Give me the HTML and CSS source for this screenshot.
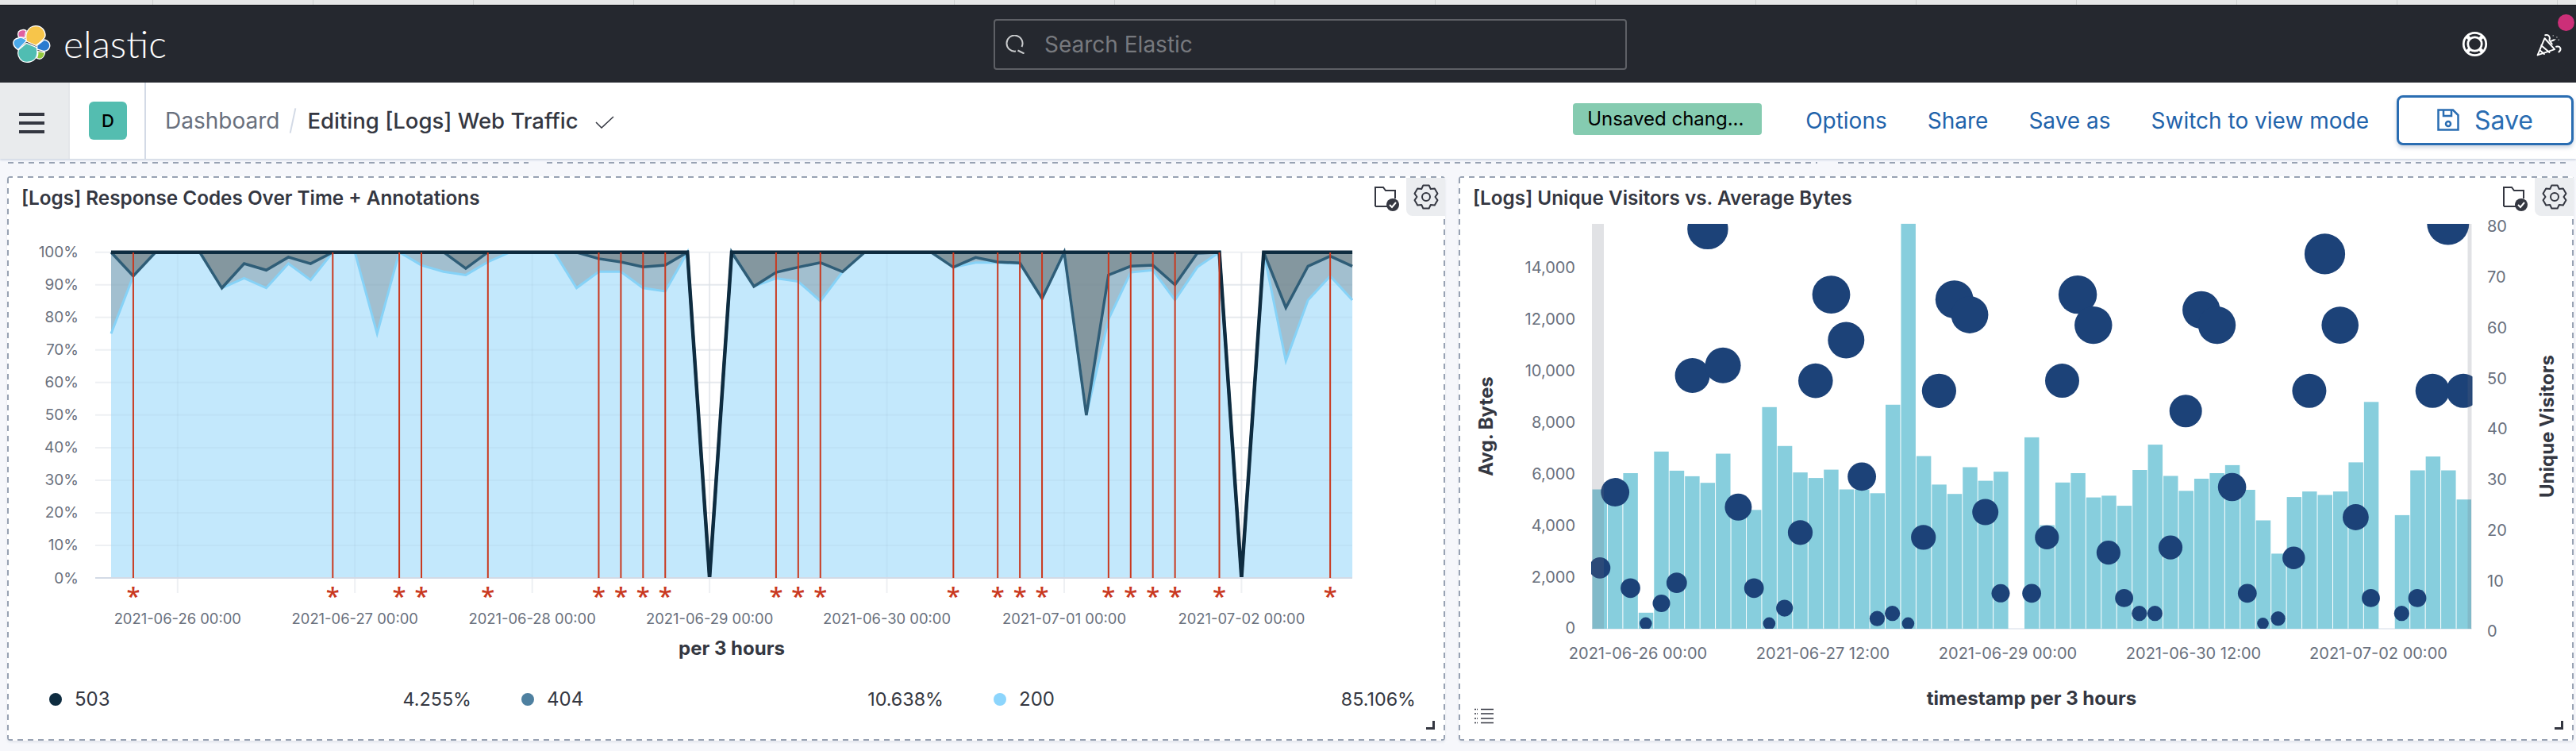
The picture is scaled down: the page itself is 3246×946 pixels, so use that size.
FILE: index.html
```html
<!DOCTYPE html>
<html lang="en">
<head>
<meta charset="utf-8">
<title>Editing [Logs] Web Traffic</title>
<link rel="stylesheet" href="styles.css">
</head>
<body>
<div class="tabstrip"></div>
<header class="topbar">
  <div class="brand">
    <svg class="logo" viewBox="48 30 144 144" aria-hidden="true">
      <g stroke="#fff" stroke-width="4" stroke-linejoin="round">
        <path fill="#e0609f" d="M70 54C78 45 92 45 99 50 96 58 95 66 95 76L70 74C67 66 67 60 70 54Z"/>
        <path fill="#4aa9ea" d="M68 78C80 74 92 78 101 88L68 122C55 113 49 102 51 92 53 84 60 80 68 78Z"/>
        <path fill="#2a7bcf" d="M140 106L168 84C182 88 190 98 188 110 186 122 175 128 165 127L140 120Z"/>
        <path fill="#93c83d" d="M142 128L170 132C168 145 160 156 150 157L139 154C143 145 144 135 142 128Z"/>
        <path fill="#50bdb2" d="M70 122L100 97 138 113C143 130 142 142 135 153 125 169 100 173 85 165 70 155 65 138 70 122Z"/>
        <path fill="#f7c54a" d="M135 32C160 32 172 52 171 70 169 80 160 88 136 106L100 90C97 75 97 66 102 54 108 40 122 32 135 32Z"/>
      </g>
    </svg>
    <span class="wordmark">elastic</span>
  </div>
  <div class="search">
    <svg class="search-icon" viewBox="0 0 24 24" aria-hidden="true"><path d="M13 20.500A10 10 0 1 1 20.500 15M15.500 19.500L23.500 23.500"/></svg>
    <span class="search-text">Search Elastic</span>
  </div>
  <div class="top-icons">
    <svg class="help" viewBox="0 0 36 36" aria-hidden="true">
      <circle cx="18" cy="18" r="15.500"/><circle cx="18" cy="18" r="9.500"/>
      <path d="M7 7l4.500 4.500M29 7l-4.500 4.500M7 29l4.500-4.500M29 29l-4.500-4.500" stroke-width="5"/>
    </svg>
    <span class="cheer-wrap">
      <svg class="cheer" viewBox="310 60 110 100" aria-hidden="true">
        <path d="M323 152L350 88 388 130ZM337 115L368 142M333 135L348 148"/>
        <path d="M352 76C366 72 372 84 368 94M378 110L368 96M372 100L386 94M394 120C410 116 416 130 404 140"/>
        <path class="dots" d="M382 78h1M396 84h1M403 94h1M390 92h1"/>
      </svg>
      <span class="badge-dot"></span>
    </span>
  </div>
</header>
<nav class="crumbbar">
  <button class="menu" aria-label="Menu"><span></span><span></span><span></span></button>
  <div class="space"><span class="avatar">D</span></div>
  <div class="crumbs">
    <span class="crumb">Dashboard</span>
    <span class="slash"></span>
    <span class="crumb current">Editing [Logs] Web Traffic</span>
    <svg class="tick" viewBox="0 0 24 16" aria-hidden="true"><path d="M1 8l7 7L23 1"/></svg>
  </div>
  <div class="actions">
    <span class="unsaved">Unsaved chang...</span>
    <a class="link">Options</a>
    <a class="link">Share</a>
    <a class="link">Save as</a>
    <a class="link last">Switch to view mode</a>
    <button class="save">
      <svg viewBox="0 0 28 28" aria-hidden="true"><path d="M1.500 1.500H20L26.500 8V26.500H1.500ZM8 1.500V9H18V1.500"/><circle cx="14" cy="19" r="3"/></svg>
      <span>Save</span>
    </button>
  </div>
</nav>
<div class="cutoff"><span class="c1"></span><span class="c2"></span><span class="c3"></span></div>
<main class="grid">
  <section class="panel">
    <div class="panel-head">
      <h2>[Logs] Response Codes Over Time + Annotations</h2>
      <svg class="folder" viewBox="0 0 32 32" aria-hidden="true"><path class="fl" d="M1 26V2H11L14 6H26V16M18 26H1"/><circle cx="23" cy="24" r="8"/><path class="ck" d="M19 24l3 3 5-6"/></svg>
      <span class="gear-btn"><svg viewBox="0 0 32 32" aria-hidden="true"><path d="M12.370 1.450H19.630L21.750 6.040 26.790 5.580 30.420 11.870 27.500 16 30.420 20.130 26.790 26.420 21.750 25.960 19.630 30.550H12.370L10.250 25.960 5.210 26.420 1.580 20.130 4.500 16 1.580 11.870 5.210 5.580 10.250 6.040Z"/><circle cx="16" cy="16" r="5"/></svg></span>
    </div>
    <svg id="chart1" class="chart c-one" viewBox="11 272 1808 568"></svg>
    <div class="legend">
      <div class="leg"><i class="dot d503"></i><span>503</span><b>4.255%</b></div>
      <div class="leg"><i class="dot d404"></i><span>404</span><b>10.638%</b></div>
      <div class="leg"><i class="dot d200"></i><span>200</span><b>85.106%</b></div>
    </div>
    <span class="resize"></span>
  </section>
  <section class="panel">
    <div class="panel-head">
      <h2>[Logs] Unique Visitors vs. Average Bytes</h2>
      <svg class="folder" viewBox="0 0 32 32" aria-hidden="true"><path class="fl" d="M1 26V2H11L14 6H26V16M18 26H1"/><circle cx="23" cy="24" r="8"/><path class="ck" d="M19 24l3 3 5-6"/></svg>
      <span class="gear-btn"><svg viewBox="0 0 32 32" aria-hidden="true"><path d="M12.370 1.450H19.630L21.750 6.040 26.790 5.580 30.420 11.870 27.500 16 30.420 20.130 26.790 26.420 21.750 25.960 19.630 30.550H12.370L10.250 25.960 5.210 26.420 1.580 20.130 4.500 16 1.580 11.870 5.210 5.580 10.250 6.040Z"/><circle cx="16" cy="16" r="5"/></svg></span>
    </div>
    <svg id="chart2" class="chart c-two" viewBox="1840 272 1401 649"></svg>
    <svg class="legend-toggle" viewBox="0 0 24 20" aria-hidden="true"><path d="M8 1.500H24M8 7H24M8 13H24M8 18.500H24"/><path d="M0 1.500H4M0 7H4M0 13H4M0 18.500H4" stroke-dasharray="2 1"/></svg>
    <span class="resize"></span>
  </section>
</main>
<script src="chart.js"></script>
</body>
</html>
```

FILE: styles.css
```css
* { box-sizing: border-box; }
html, body { margin: 0; padding: 0; }
body {
  width: 3246px; height: 946px; overflow: hidden;
  background: #f6f7fb;
  font-family: Inter, "Liberation Sans", sans-serif;
  color: #343741;
}
.tabstrip {
  height: 7px;
  border-bottom: 1px solid #15171b;
  background: repeating-linear-gradient(90deg, #e6e7e7 0 192px, #cfd1d1 192px 193px, #e6e7e7 193px 202px);
}
.topbar { height: 97px; background: #25282f; display: flex; align-items: center; }
.brand { flex: 0 0 1252px; display: flex; align-items: center; padding-left: 16px; }
.logo { width: 48px; height: 48px; }
.wordmark { margin-left: 16px; font-family: Lato, sans-serif; font-weight: 300; font-size: 48px; line-height: 48px; color: #fff; position: relative; top: -1px; }
.search {
  flex: 0 0 798px; height: 64px; display: flex; align-items: center;
  border: 2px solid #5e6066; border-radius: 4px; padding-left: 13px;
}
.search-icon { width: 24px; height: 24px; fill: none; stroke: #c9cbcd; stroke-width: 2; }
.search-text { margin-left: 25px; font-size: 28px; color: #77797e; }
.top-icons { flex: 1; display: flex; align-items: center; justify-content: flex-end; padding-right: 16px; }
.help { width: 33px; height: 33px; fill: none; stroke: #fff; stroke-width: 3; margin-right: 58px; }
.cheer-wrap { display: block; width: 37px; height: 33px; position: relative; }
.cheer { display: block; width: 37px; height: 33px; fill: none; stroke: #fff; stroke-width: 6; stroke-linejoin: round; stroke-linecap: round; }
.cheer .dots { stroke-width: 4; stroke: #b9bbbe; }
.badge-dot { position: absolute; right: -14px; top: -21px; width: 21px; height: 21px; border-radius: 50%; background: #cc2f78; }

.crumbbar { height: 96px; background: #fff; display: flex; align-items: stretch; box-shadow: 0 2px 2px #d3dae6; position: relative; }
.menu {
  flex: 0 0 88px; background: #e9ebed; border: 0; padding: 38px 32px 0 24px; position: relative;
  display: flex; flex-direction: column; gap: 7px; align-items: stretch;
  box-shadow: inset -2px 0 0 #e4e6e9;
}
.menu span { height: 4px; background: #343741; }
.space { flex: 0 0 96px; padding: 24px 0 0 24px; border-right: 2px solid #d3dae6; }
.avatar {
  display: flex; width: 48px; height: 48px; border-radius: 6px; background: #54bdb0;
  align-items: center; justify-content: center; font-size: 22px; font-weight: 500; color: #000;
}
.crumbs { display: flex; align-items: center; padding-left: 24px; height: 96px; }
.crumb { font-size: 28px; color: #69707d; }
.crumb.current { color: #343741; font-weight: 500; font-size: 27.500px; }
.slash { width: 2px; height: 32px; background: #d3dae6; transform: rotate(12deg); margin: 0 17px 0 16px; }
.tick { width: 24px; height: 16px; margin-left: 21px; fill: none; stroke: #343741; stroke-width: 1.500; margin-top: 3px; }
.actions { margin-left: auto; display: flex; align-items: center; padding-right: 3px; }
.unsaved {
  width: 238px; height: 40px; background: #85cbb0; border-radius: 4px; margin-right: 55px; position: relative; top: -2px;
  font-size: 24px; line-height: 40px; padding-left: 18px; color: #000; white-space: nowrap;
}
.link { font-size: 28px; color: #1f63ab; margin-right: 51px; white-space: nowrap; }
.link.last { margin-right: 35px; }
.save {
  width: 223px; height: 63px; background: #fff; border: 3px solid #2a6db2; border-radius: 8px;
  box-shadow: 0 3px 5px rgba(60, 90, 140, .25);
  display: flex; align-items: center; justify-content: center; gap: 19px;
  font: 400 32px Inter, sans-serif; color: #2a6db2; position: relative; top: -1px;
}
.save svg { width: 28px; height: 28px; fill: none; stroke: #2a6db2; stroke-width: 2.500; }

.cutoff { height: 22px; display: flex; }
.cutoff span { display: block; height: 2px; margin-top: 4px; background: repeating-linear-gradient(90deg, #98a2b3 0 7px, transparent 7px 13px); }
.c1 { margin-left: 10px; width: 656px; }
.c2 { margin-left: 23px; width: 1601px; }
.c3 { margin-left: 26px; width: 923px; }

.grid { display: grid; grid-template-columns: 1812px 1405px; gap: 17px; padding-left: 9px; }
.panel {
  height: 711px; padding: 2px; border-radius: 4px; position: relative;
  background:
    repeating-linear-gradient(90deg, #98a2b3 0 7px, transparent 7px 13px) top / 100% 2px no-repeat,
    repeating-linear-gradient(90deg, #98a2b3 0 7px, transparent 7px 13px) bottom / 100% 2px no-repeat,
    repeating-linear-gradient(0deg, #98a2b3 0 7px, transparent 7px 13px) left / 2px 100% no-repeat,
    repeating-linear-gradient(0deg, #98a2b3 0 7px, transparent 7px 13px) right / 2px 100% no-repeat,
    #fff;
  box-shadow: 0 2px 3px rgba(152, 162, 179, .2);
}
.panel-head { height: 48px; display: flex; align-items: center; padding-left: 16px; }
.panel-head h2 { margin: 0 auto 0 0; font-size: 24.300px; font-weight: 600; color: #343741; position: relative; top: 1px; }
.folder { width: 32px; height: 32px; fill: #343741; margin-right: 8px; position: relative; top: 2px; }
.folder .fl { fill: none; stroke: #343741; stroke-width: 2; }
.folder .ck { fill: none; stroke: #fff; stroke-width: 2; }
.gear-btn { width: 49px; height: 48px; margin-right: -2px; background: #ebedf0; border-bottom-left-radius: 8px; display: flex; align-items: center; justify-content: center; }
.gear-btn svg { width: 32px; height: 32px; fill: none; stroke: #343741; stroke-width: 2; stroke-linejoin: round; }
.chart { display: block; width: 100%; }
.c-one { height: 568px; }
.c-two { height: 649px; }
.chart text { font-family: Inter, sans-serif; }
.t-axis { font-size: 19px; fill: #69707d; }
.t-time { font-size: 18.400px; fill: #69707d; }
.c-two .t-axis { font-size: 20px; }
.c-two .t-time { font-size: 20px; }
.t-title { font-size: 24px; font-weight: 700; fill: #343741; }
.chart .t-star { font-family: "Open Sans", sans-serif; font-size: 31px; font-weight: 600; fill: #c9391f; }
.legend { height: 81px; display: flex; gap: 63px; padding-left: 51px; align-items: center; }
.leg { width: 532px; display: flex; align-items: center; font-size: 24px; color: #343741; }
.leg span { margin-left: 16px; }
.leg b { margin-left: auto; font-weight: 400; font-size: 23.300px; }
.dot { width: 16px; height: 16px; border-radius: 50%; }
.d503 { background: #0e2c40; }
.d404 { background: #4e80a0; }
.d200 { background: #8cd5fc; }
.resize { position: absolute; right: 13px; bottom: 14px; width: 11px; height: 11px; border-right: 3px solid #343741; border-bottom: 3px solid #343741; }
.legend-toggle { position: absolute; left: 20px; bottom: 21px; width: 24px; height: 20px; fill: none; stroke: #343741; stroke-width: 1.500; }
```

FILE: chart.js
```js
const NS = 'http://www.w3.org/2000/svg';
function el(parent, name, attrs, text) {
  const n = document.createElementNS(NS, name);
  for (const k in attrs) n.setAttribute(k, attrs[k]);
  if (text !== undefined) n.textContent = text;
  parent.appendChild(n);
  return n;
}

/* ---------- Response codes ---------- */
(function () {
  const svg = document.getElementById('chart1');
  const x0 = 140, dx = 27.93, y0 = 728, py = 4.103, xEnd = 1704;
  const X = i => x0 + dx * i, Y = v => y0 - v * py;
  const v200 = [75,92.7,100,100,100,89,92,89,96.5,91.5,100,100,75,100,96,94,93,97,100,100,100,89,94,94,89,88,100,0,
    100,89.5,92,91,85,94,100,100,100,100,95.4,96.8,96.8,96.5,85.8,100,50,79.4,93.8,94.5,85.3,95.4,100,0,100,66.6,85.3,92.7,85.3];
  const v404 = [100,92.7,100,100,100,89,96.5,94.5,98.5,96.5,100,100,100,100,100,100,95,100,100,100,100,100,98,97,95.500,96,100,0,
    100,89.5,93.8,95.4,96.8,94,100,100,100,100,95.4,98.4,97,96.7,85.8,100,50,93,95.7,96,90,99.7,100,0,100,83,95.7,98.8,95.7];
  const v503 = v200.map((v, i) => (i === 27 || i === 51) ? 0 : 100);
  const zero = v200.map(() => 0);
  const pts = a => a.map((v, i) => X(i).toFixed(1) + ',' + Y(v).toFixed(1));
  const area = (up, lo, fill) => el(svg, 'polygon', { points: pts(up).concat(pts(lo).reverse()).join(' '), fill });
  const line = (a, stroke, w) => el(svg, 'polyline', { points: pts(a).join(' '), fill: 'none', stroke, 'stroke-width': w, 'stroke-linejoin': 'miter' });

  for (let v = 10; v <= 100; v += 10) el(svg, 'line', { x1: 120, x2: xEnd, y1: Y(v), y2: Y(v), stroke: '#eef0f3', 'stroke-width': 2 });
  const ticks = ['2021-06-26 00:00','2021-06-27 00:00','2021-06-28 00:00','2021-06-29 00:00','2021-06-30 00:00','2021-07-01 00:00','2021-07-02 00:00'];
  ticks.forEach((t, m) => {
    const x = X(3 + 8 * m);
    el(svg, 'line', { x1: x, x2: x, y1: 318, y2: 747, stroke: '#eef0f3', 'stroke-width': 2 });
  });
  area(v200, zero, '#c3e8fc');
  area(v404, v200, '#a2bfcf');
  area(v503, v404, '#84979f');
  for (let v = 10; v <= 90; v += 10) el(svg, 'line', { x1: 140, x2: xEnd, y1: Y(v), y2: Y(v), stroke: 'rgba(90,120,140,.05)', 'stroke-width': 2 });
  ticks.forEach((t, m) => {
    const x = X(3 + 8 * m);
    el(svg, 'line', { x1: x, x2: x, y1: 318, y2: 728, stroke: 'rgba(90,120,140,.05)', 'stroke-width': 2 });
    el(svg, 'text', { x, y: 779, class: 't-time', 'text-anchor': 'middle', 'dominant-baseline': 'central' }, t);
  });
  line(v200, '#86d2f7', 3);
  line(v404, '#2f5d77', 3.5);
  line(v503, '#0e2c40', 4.5);
  el(svg, 'line', { x1: 120, x2: xEnd, y1: y0, y2: y0, stroke: '#d3dae6', 'stroke-width': 2 });
  for (let v = 0; v <= 100; v += 10) el(svg, 'text', { x: 99, y: Y(v), class: 't-axis', 'text-anchor': 'end', 'dominant-baseline': 'central' }, v + '%');
  [1,10,13,14,17,22,23,24,25,30,31,32,38,40,41,42,45,46,47,48,50,55].forEach(i => {
    const x = X(i);
    el(svg, 'line', { x1: x, x2: x, y1: 318, y2: 728, stroke: '#c9391f', 'stroke-width': 2 });
    el(svg, 'text', { x, y: 762, class: 't-star', 'text-anchor': 'middle' }, '*');
  });
  el(svg, 'text', { x: 922, y: 816, class: 't-title', 'text-anchor': 'middle', 'dominant-baseline': 'central' }, 'per 3 hours');
})();

/* ---------- Visitors vs bytes ---------- */
(function () {
  const svg = document.getElementById('chart2');
  const L = 2006, R = 3114.5, T = 282, B = 792, step = (R - L) / 57;
  const zy = z => 260 + z / 2.286;
  const defs = el(svg, 'defs', {});
  const clip = el(defs, 'clipPath', { id: 'plot' });
  el(clip, 'rect', { x: L - 1, y: T, width: R - L + 2, height: B - T });

  el(svg, 'line', { x1: L, x2: R, y1: B, y2: B, stroke: '#e9edf3', 'stroke-width': 2 });
  const bars = [815,805,768,1170,706,761,777,796,712,850,874,578,690,766,782,758,815,815,826,571,50,719,801,828,751,790,764,null,
    665,918,795,768,838,833,862,759,686,776,819,784,768,745,816,904,1000,837,821,831,821,737,563,null,889,760,720,760,844];
  bars.forEach((z, k) => {
    if (z === null) return;
    const y = zy(z);
    el(svg, 'rect', { x: (L + step * k + .5).toFixed(2), y: y.toFixed(1), width: (step - 1).toFixed(2), height: (B - y).toFixed(1), fill: '#87cedd' });
  });
  const g = el(svg, 'g', { 'clip-path': 'url(#plot)', fill: '#1c4278' });
  const a = [[701,65,112],[1040,254,104],[1378,268,104],[1420,312,102],[1081,385,100],[659,487,96],[743,458,98],[997,502,95],[1336,531,94],
    [447,823,78],[1124,778,78],[785,866,74],[955,939,68],[1293,953,68],[1463,880,72],[405,1041,58],[489,1099,54],[616,1084,56],[574,1143,48],
    [531,1201,34],[828,1099,54],[870,1201,34],[912,1157,46],[1166,1187,42],[1208,1172,42],[1251,1201,34],[1505,1114,50]];
  a.forEach(c => el(g, 'circle', { cx: (1830 + c[0] / 2.178).toFixed(1), cy: zy(c[1]).toFixed(1), r: (c[2] / 2 / 2.178).toFixed(1) }));
  const b = [[66,1114,52],[193,254,106],[236,342,104],[150,502,94],[108,953,66],[278,997,66],[321,1128,50],[363,1172,42],[406,1172,42],[449,982,66],
    [491,589,90],[534,298,104],[577,342,104],[619,808,78],[661,1114,52],[704,1201,32],[746,1187,40],[789,1012,62],[832,531,94],[875,137,112],
    [917,342,102],[960,895,72],[1002,1128,50],[1087,1172,42],[1130,1128,50],[1172,531,94],[1215,50,116],[1257,531,94]];
  b.forEach(c => el(g, 'circle', { cx: (2530 + c[0] / 2.19).toFixed(1), cy: zy(c[1]).toFixed(1), r: (c[2] / 2 / 2.19).toFixed(1) }));
  el(svg, 'rect', { x: L, y: T, width: 15, height: B - T, fill: 'rgba(105,112,125,.2)' });
  el(svg, 'rect', { x: R - 5, y: T, width: 5, height: B - T, fill: 'rgba(105,112,125,.2)' });

  [['14,000',176],['12,000',325],['10,000',473],['8,000',621],['6,000',770],['4,000',918],['2,000',1067],['0',1213]].forEach(t =>
    el(svg, 'text', { x: 1985, y: zy(t[1]), class: 't-axis', 'text-anchor': 'end', 'dominant-baseline': 'central' }, t[0]));
  [['80',57],['70',203],['60',349],['50',496],['40',640],['30',786],['20',933],['10',1079],['0',1222]].forEach(t =>
    el(svg, 'text', { x: 3134, y: zy(t[1]), class: 't-axis', 'dominant-baseline': 'central' }, t[0]));
  [['2021-06-26 00:00',2064],['2021-06-27 12:00',2297],['2021-06-29 00:00',2530],['2021-06-30 12:00',2764],['2021-07-02 00:00',2997]].forEach(t =>
    el(svg, 'text', { x: t[1], y: 822.6, class: 't-time', 'text-anchor': 'middle', 'dominant-baseline': 'central' }, t[0]));
  el(svg, 'text', { x: 2560, y: 879.5, class: 't-title', 'text-anchor': 'middle', 'dominant-baseline': 'central' }, 'timestamp per 3 hours');
  el(svg, 'text', { x: 1872, y: 537, class: 't-title', 'text-anchor': 'middle', 'dominant-baseline': 'central', transform: 'rotate(-90 1872 537)' }, 'Avg. Bytes');
  el(svg, 'text', { x: 3209, y: 537, class: 't-title', 'text-anchor': 'middle', 'dominant-baseline': 'central', transform: 'rotate(-90 3209 537)' }, 'Unique Visitors');
})();
```
